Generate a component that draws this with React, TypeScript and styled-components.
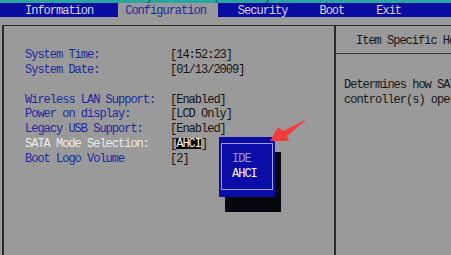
import React, { FC } from "react";
import styled, { createGlobalStyle } from "styled-components";

const GlobalStyle = createGlobalStyle`
  html, body {
    margin: 0;
    padding: 0;
    background: #9a9a9a;
  }
`

const Screen = styled.div`
  position: relative;
  width: 451px;
  height: 255px;
  overflow: hidden;
  background: #9a9a9a;
  font-family: "Liberation Mono", "DejaVu Sans Mono", monospace;
  font-size: 12px;
  letter-spacing: -1px;
  display: flex;
  flex-direction: column;
`

const TitleStrip = styled.div`
  height: 3px;
  background: #2aa6a0;
  overflow: hidden;
  padding-left: 128px;
  color: #1d4654;
  white-space: pre;
`

const TitleText = styled.div`
  line-height: 12px;
  margin-top: -9px;
`

const MenuBar = styled.div`
  height: 14px;
  background: #0b0ca2;
  display: flex;
  gap: 13px;
  padding-left: 18px;
`

const MenuItem = styled.div<{ $active?: boolean }>`
  padding: 2px 12px 0 7px;
  line-height: 12px;
  color: ${p => (p.$active ? "#1a2a9c" : "#d4d6f4")};
  background: ${p => (p.$active ? "#9a9a9a" : "transparent")};
  white-space: nowrap;
`

const Frame = styled.div`
  margin: 8px 0 0 2px;
  flex: 1;
  border-top: 1px solid #2a2a2a;
  border-left: 2px solid #2a2a2a;
  display: grid;
  grid-template-columns: 330px 1fr;
`

const MainPanel = styled.div`
  padding: 22px 0 0 21px;
`

const Row = styled.div`
  display: grid;
  grid-template-columns: 145px 1fr;
  height: 14.85px;
  line-height: 14.85px;
  white-space: pre;
`

const Label = styled.span<{ $selected?: boolean }>`
  color: ${p => (p.$selected ? "#ececec" : "#1a2a9e")};
`

const Value = styled.span`
  color: #141414;
`

const Highlight = styled.span`
  display: inline-block;
  background: #080808;
  color: #f2f2f2;
  line-height: 10px;
  padding-top: 1px;
`

const HelpPanel = styled.div`
  border-left: 2px solid #2a2a2a;
  color: #161616;
  white-space: nowrap;
  overflow: hidden;
`

const HelpHeader = styled.div`
  height: 28px;
  padding: 8px 0 0 20px;
  box-sizing: border-box;
  line-height: 15px;
  border-bottom: 1px solid #3a3a3a;
`

const HelpBody = styled.div`
  padding: 24px 0 0 8px;
  line-height: 15px;
`

const Popup = styled.div`
  position: absolute;
  left: 219px;
  top: 137px;
  width: 56px;
  height: 60px;
  background: #0c0ca6;
  box-shadow: 6px 15px 0 #04080c;
  padding: 6px 2px 7px 2px;
  box-sizing: border-box;
`

const PopupInner = styled.div`
  height: 100%;
  border: 1px solid #a4a4e4;
  box-sizing: border-box;
  padding: 8px 0 0 10px;
`

const Option = styled.div<{ $current?: boolean }>`
  line-height: 15px;
  color: ${p => (p.$current ? "#f4f4ff" : "#9a9ad8")};
`

const Arrow = styled.svg`
  position: absolute;
  left: 0;
  top: 0;
`

interface Setting {
    label: string,
    value?: string,
    selected?: boolean,
}

const settings: Setting[] = [
    {label: "System Time:", value: "[14:52:23]"},
    {label: "System Date:", value: "[01/13/2009]"},
    {label: ""},
    {label: "Wireless LAN Support:", value: "[Enabled]"},
    {label: "Power on display:", value: "[LCD Only]"},
    {label: "Legacy USB Support:", value: "[Enabled]"},
    {label: "SATA Mode Selection:", value: "AHCI", selected: true},
    {label: "Boot Logo Volume", value: "[2]"},
]

const menu = ["Information", "Configuration", "Security", "Boot", "Exit"]

const App: FC = () => {
    return (
        <Screen>
            <GlobalStyle/>
            <TitleStrip>
                <TitleText>InsydeH2O Setup Utility                Rev. 3.5</TitleText>
            </TitleStrip>
            <MenuBar>
                {menu.map(item => (
                    <MenuItem key={item} $active={item === "Configuration"}>{item}</MenuItem>
                ))}
            </MenuBar>
            <Frame>
                <MainPanel>
                    {settings.map((s, i) => (
                        <Row key={i}>
                            <Label $selected={s.selected}>{s.label}</Label>
                            {s.selected ? (
                                <Value>[<Highlight>{s.value}</Highlight>]</Value>
                            ) : (
                                <Value>{s.value}</Value>
                            )}
                        </Row>
                    ))}
                </MainPanel>
                <HelpPanel>
                    <HelpHeader>Item Specific Help</HelpHeader>
                    <HelpBody>
                        <div>Determines how SATA</div>
                        <div>controller(s) operate.</div>
                    </HelpBody>
                </HelpPanel>
            </Frame>
            <Popup>
                <PopupInner>
                    <Option>IDE</Option>
                    <Option $current>AHCI</Option>
                </PopupInner>
            </Popup>
            <Arrow width="451" height="255" viewBox="0 0 451 255">
                <polygon
                    points="270,141 278,127 283,131 307,119 287,136 289,141"
                    fill="#f23c3c"
                />
            </Arrow>
        </Screen>
    )
}

export default App
